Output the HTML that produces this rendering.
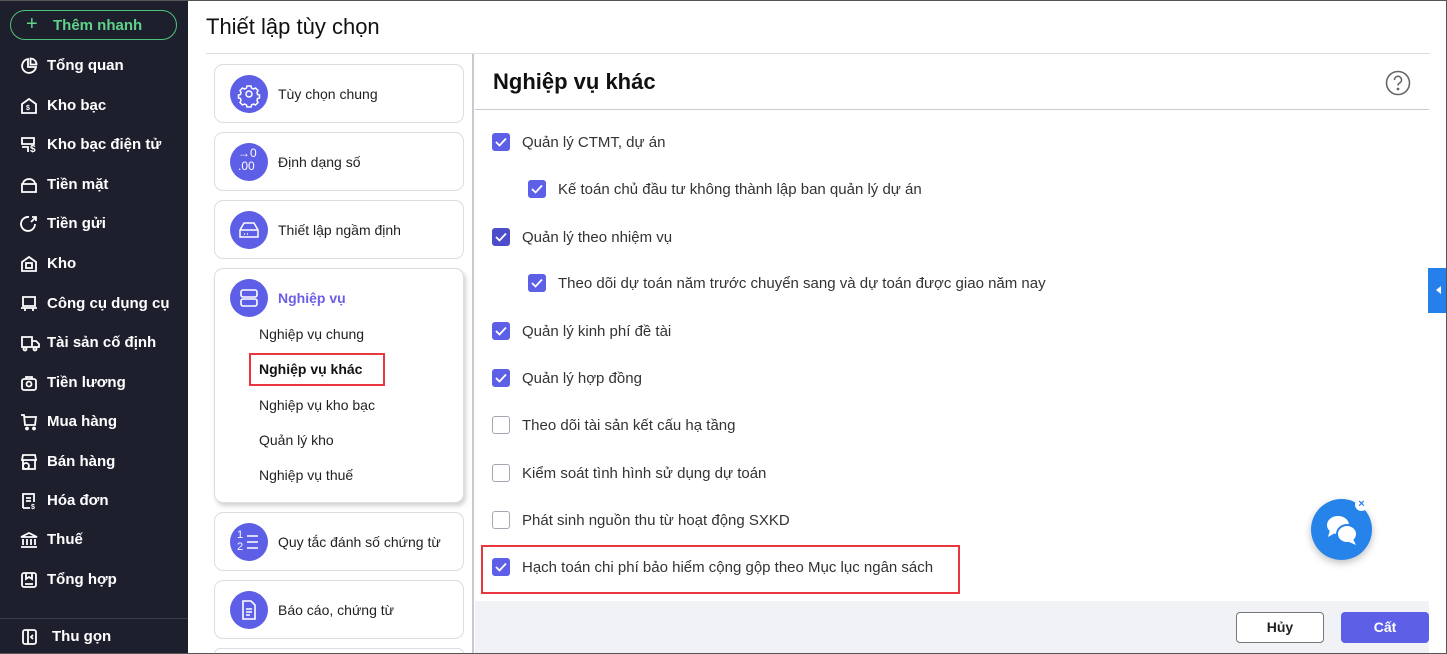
<!DOCTYPE html>
<html style="width:1447px;height:654px;overflow:hidden"><head><meta charset="utf-8"><style>
*{box-sizing:border-box;margin:0;padding:0}
body{width:1447px;height:654px;overflow:hidden;background:#fff;font-family:"Liberation Sans",sans-serif;position:relative;color:#222}
.abs{position:absolute}
#frame{position:absolute;left:0;top:0;width:1447px;height:654px;border:1px solid #555;border-left:none;pointer-events:none;z-index:50}
#side{left:0;top:0;width:188px;height:654px;background:#1e1f2d;color:#fff}
.add{left:10px;top:10px;width:167px;height:30px;border:1px solid #4fc27a;border-radius:15px;color:#5fd38a;font-size:15px;font-weight:bold}
.si{position:absolute;left:20px;font-size:15px;font-weight:bold;color:#fff;height:20px;line-height:20px;white-space:nowrap}
.si svg{position:absolute;left:0;top:1px}
.si span{position:absolute;left:27px}
.card{position:absolute;left:214px;width:250px;border:1px solid #dcdde3;border-radius:9px;background:#fff}
.ic{position:absolute;left:15px;width:38px;height:38px;border-radius:50%;background:#5d5fe6}
.ct{position:absolute;left:63px;font-size:14px;color:#222}
.sub{position:absolute;left:259px;font-size:14px;color:#222}
.cb{position:absolute;width:18px;height:18px;border-radius:3px;background:#5d5fe6}
.cb.off{background:#fff;border:1.5px solid #a5a7b2}
.cb svg{position:absolute;left:3px;top:4px}
.lb{position:absolute;font-size:15px;color:#333;white-space:nowrap}
</style></head><body>
<div id="frame"></div>
<div id="side" class="abs">
 <div class="abs add"><span style="position:absolute;left:15px;top:2px;font-size:20px;font-weight:normal;line-height:22px">+</span><span style="position:absolute;left:42px;top:6px">Thêm nhanh</span></div>
 <div class="si" style="top:56px"><svg width="18" height="18" viewBox="0 0 18 18" fill="none" stroke="#fff" stroke-width="1.8"><path d="M8 2a7 7 0 1 0 8 8H8z"/><path d="M10.5 1.5v6h6a6 6 0 0 0-6-6z"/></svg><span>Tổng quan</span></div>
 <div class="si" style="top:96px"><svg width="18" height="18" viewBox="0 0 18 18" fill="none" stroke="#fff" stroke-width="1.8"><path d="M2 7l7-5 7 5v9H2z"/><text x="6" y="13" font-size="7" fill="#fff" stroke="none">$</text></svg><span>Kho bạc</span></div>
 <div class="si" style="top:135px"><svg width="20" height="18" viewBox="0 0 20 18" fill="none" stroke="#fff" stroke-width="1.8"><path d="M2 2h12v6H2zM2 11h6v5"/><text x="10" y="16" font-size="10" fill="#fff" stroke="none" font-weight="bold">$</text></svg><span>Kho bạc điện tử</span></div>
 <div class="si" style="top:175px"><svg width="18" height="18" viewBox="0 0 18 18" fill="none" stroke="#fff" stroke-width="1.8"><path d="M3 8a6 5 0 0 1 12 0M2 8h14v8H2z"/></svg><span>Tiền mặt</span></div>
 <div class="si" style="top:214px"><svg width="18" height="18" viewBox="0 0 18 18" fill="none" stroke="#fff" stroke-width="1.8"><path d="M15 9a7 7 0 1 1-6-7M12 2h4v4M16 2l-5 5"/></svg><span>Tiền gửi</span></div>
 <div class="si" style="top:254px"><svg width="18" height="18" viewBox="0 0 18 18" fill="none" stroke="#fff" stroke-width="1.8"><path d="M2 7l7-5 7 5v9H2z"/><rect x="6" y="8" width="6" height="5"/></svg><span>Kho</span></div>
 <div class="si" style="top:294px"><svg width="18" height="18" viewBox="0 0 18 18" fill="none" stroke="#fff" stroke-width="1.8"><path d="M3 2h12v9H3zM1 13h16M5 13v3M13 13v3"/></svg><span>Công cụ dụng cụ</span></div>
 <div class="si" style="top:333px"><svg width="20" height="18" viewBox="0 0 20 18" fill="none" stroke="#fff" stroke-width="1.8"><path d="M2 3h10v10H2zM12 7h4l3 3v3h-7"/><circle cx="5" cy="15" r="1.5"/><circle cx="15" cy="15" r="1.5"/></svg><span>Tài sản cố định</span></div>
 <div class="si" style="top:373px"><svg width="18" height="18" viewBox="0 0 18 18" fill="none" stroke="#fff" stroke-width="1.8"><rect x="2" y="5" width="14" height="11" rx="2"/><path d="M6 5V3h6v2"/><circle cx="9" cy="10" r="2.5"/></svg><span>Tiền lương</span></div>
 <div class="si" style="top:412px"><svg width="18" height="18" viewBox="0 0 18 18" fill="none" stroke="#fff" stroke-width="1.8"><path d="M1 2h3l1 10h10l1-8H5"/><circle cx="7" cy="15.5" r="1"/><circle cx="14" cy="15.5" r="1"/></svg><span>Mua hàng</span></div>
 <div class="si" style="top:452px"><svg width="18" height="18" viewBox="0 0 18 18" fill="none" stroke="#fff" stroke-width="1.8"><path d="M3 2h12l1 5H2zM3 7v9h12V7"/><circle cx="6" cy="13" r="3"/></svg><span>Bán hàng</span></div>
 <div class="si" style="top:491px"><svg width="18" height="18" viewBox="0 0 18 18" fill="none" stroke="#fff" stroke-width="1.8"><path d="M3 16V2h11v8M6 6h5M6 9h5M3 16h7"/><text x="11" y="17" font-size="7" fill="#fff" stroke="none">$</text></svg><span>Hóa đơn</span></div>
 <div class="si" style="top:530px"><svg width="18" height="18" viewBox="0 0 18 18" fill="none" stroke="#fff" stroke-width="1.8"><path d="M1 6l8-4 8 4zM3 8v6M7 8v6M11 8v6M15 8v6M1 16h16"/></svg><span>Thuế</span></div>
 <div class="si" style="top:570px"><svg width="18" height="18" viewBox="0 0 18 18" fill="none" stroke="#fff" stroke-width="1.8"><rect x="2" y="2" width="14" height="14" rx="2"/><path d="M6 2v6l3-2 3 2V2M5 13h8"/></svg><span>Tổng hợp</span></div>
 <div class="si" style="top:610px;height:8px;overflow:hidden"><svg width="18" height="18" viewBox="0 0 18 18" fill="none" stroke="#fff" stroke-width="1.8"><rect x="2" y="2" width="14" height="14" rx="2"/></svg><span>Báo cáo</span></div>
 <div class="abs" style="left:0;top:618px;width:188px;height:36px;border-top:1px solid #3a3b4c;background:#1e1f2d"></div>
 <div class="si" style="top:627px;left:22px"><svg width="16" height="18" viewBox="0 0 16 18" fill="none" stroke="#fff" stroke-width="1.8"><rect x="1" y="2" width="13" height="14" rx="2"/><path d="M6 2v14M11 7l-2 2 2 2"/></svg><span style="left:30px">Thu gọn</span></div>
</div>

<div class="abs" style="left:206px;top:14px;font-size:22px;color:#111">Thiết lập tùy chọn</div>
<div class="abs" style="left:206px;top:53px;width:1224px;height:1px;background:#dcdde2"></div>
<div class="abs" style="left:472px;top:54px;width:2px;height:600px;background:#c9cad1"></div>

<div class="card" style="top:64px;height:59px"><div class="ic" style="top:10px"><svg width="38" height="38" viewBox="0 0 38 38" fill="none" stroke="#fff" stroke-width="1.5"><circle cx="19" cy="19" r="3"/><path d="M17 11h4l.5 2 2 1 2-1 2.5 2.5-1 2 .5 2 2 .5v3l-2 .5-.5 2 1 2-2.5 2.5-2-1-2 1-.5 2h-4l-.5-2-2-1-2 1-2.5-2.5 1-2-.5-2-2-.5v-3l2-.5.5-2-1-2 2.5-2.5 2 1 2-1z"/></svg></div><div class="ct" style="top:21px">Tùy chọn chung</div></div>
<div class="card" style="top:132px;height:59px"><div class="ic" style="top:10px"><div style="position:absolute;left:8px;top:4px;color:#fff;font-size:12px;line-height:13px">→0<br>.00</div></div><div class="ct" style="top:21px">Định dạng số</div></div>
<div class="card" style="top:200px;height:59px"><div class="ic" style="top:10px"><svg width="38" height="38" viewBox="0 0 38 38" fill="none" stroke="#fff" stroke-width="1.5"><path d="M10 19l4-7h10l4 7v7H10zM10 19h18"/><path d="M14 23h1M17 23h1"/></svg></div><div class="ct" style="top:21px">Thiết lập ngầm định</div></div>
<div class="card" style="top:268px;height:235px;box-shadow:2px 3px 5px rgba(0,0,0,.18)"><div class="ic" style="top:10px"><svg width="38" height="38" viewBox="0 0 38 38" fill="none" stroke="#fff" stroke-width="1.6"><rect x="11" y="11" width="16" height="7" rx="2"/><rect x="11" y="20" width="16" height="7" rx="2"/></svg></div><div class="ct" style="top:21px;color:#6a5fe6;font-weight:bold">Nghiệp vụ</div></div>
<div class="sub" style="top:326px">Nghiệp vụ chung</div>
<div class="abs" style="left:249px;top:353px;width:136px;height:33px;border:2px solid #e8373f"></div>
<div class="sub" style="top:361px;font-weight:bold;color:#111">Nghiệp vụ khác</div>
<div class="sub" style="top:397px">Nghiệp vụ kho bạc</div>
<div class="sub" style="top:432px">Quản lý kho</div>
<div class="sub" style="top:467px">Nghiệp vụ thuế</div>
<div class="card" style="top:512px;height:59px"><div class="ic" style="top:10px"><div style="position:absolute;left:7px;top:6px;color:#fff;font-size:11px;line-height:12px">1<br>2</div><svg width="38" height="38" viewBox="0 0 38 38" stroke="#fff" stroke-width="1.6"><path d="M17 13h11M17 19h11M17 25h11"/></svg></div><div class="ct" style="top:21px">Quy tắc đánh số chứng từ</div></div>
<div class="card" style="top:580px;height:59px"><div class="ic" style="top:10px"><svg width="38" height="38" viewBox="0 0 38 38" fill="none" stroke="#fff" stroke-width="1.6"><path d="M13 10h8l4 4v14H13z"/><path d="M16 18h6M16 21h6M16 24h4"/></svg></div><div class="ct" style="top:21px">Báo cáo, chứng từ</div></div>
<div class="card" style="top:648px;height:6px;border-bottom:none;border-radius:9px 9px 0 0"></div>

<div class="abs" style="left:493px;top:69px;font-size:22px;font-weight:bold;color:#111">Nghiệp vụ khác</div>
<svg class="abs" style="left:1385px;top:70px" width="26" height="26" viewBox="0 0 26 26" fill="none" stroke="#666" stroke-width="1.6"><circle cx="13" cy="13" r="11.5"/><path d="M9.5 10a3.5 3.5 0 1 1 5 3c-1 .6-1.5 1.2-1.5 2.5"/><circle cx="13" cy="19" r=".6" fill="#666"/></svg>
<div class="abs" style="left:475px;top:109px;width:954px;height:1px;background:#c9cad1"></div>

<div class="cb" style="left:492px;top:133px"><svg width="12" height="10" viewBox="0 0 12 10" fill="none" stroke="#fff" stroke-width="1.8"><path d="M1 5l3.5 3.5L11 1.5"/></svg></div><div class="lb" style="left:522px;top:134px">Quản lý CTMT, dự án</div>
<div class="cb" style="left:528px;top:180px"><svg width="12" height="10" viewBox="0 0 12 10" fill="none" stroke="#fff" stroke-width="1.8"><path d="M1 5l3.5 3.5L11 1.5"/></svg></div><div class="lb" style="left:558px;top:181px">Kế toán chủ đầu tư không thành lập ban quản lý dự án</div>
<div class="cb" style="left:492px;top:228px;background:#4b4dc9"><svg width="12" height="10" viewBox="0 0 12 10" fill="none" stroke="#fff" stroke-width="1.8"><path d="M1 5l3.5 3.5L11 1.5"/></svg></div><div class="lb" style="left:522px;top:229px">Quản lý theo nhiệm vụ</div>
<div class="cb" style="left:528px;top:274px"><svg width="12" height="10" viewBox="0 0 12 10" fill="none" stroke="#fff" stroke-width="1.8"><path d="M1 5l3.5 3.5L11 1.5"/></svg></div><div class="lb" style="left:558px;top:275px">Theo dõi dự toán năm trước chuyển sang và dự toán được giao năm nay</div>
<div class="cb" style="left:492px;top:322px"><svg width="12" height="10" viewBox="0 0 12 10" fill="none" stroke="#fff" stroke-width="1.8"><path d="M1 5l3.5 3.5L11 1.5"/></svg></div><div class="lb" style="left:522px;top:323px">Quản lý kinh phí đề tài</div>
<div class="cb" style="left:492px;top:369px"><svg width="12" height="10" viewBox="0 0 12 10" fill="none" stroke="#fff" stroke-width="1.8"><path d="M1 5l3.5 3.5L11 1.5"/></svg></div><div class="lb" style="left:522px;top:370px">Quản lý hợp đồng</div>
<div class="cb off" style="left:492px;top:416px"></div><div class="lb" style="left:522px;top:417px">Theo dõi tài sản kết cấu hạ tầng</div>
<div class="cb off" style="left:492px;top:464px"></div><div class="lb" style="left:522px;top:465px">Kiểm soát tình hình sử dụng dự toán</div>
<div class="cb off" style="left:492px;top:511px"></div><div class="lb" style="left:522px;top:512px">Phát sinh nguồn thu từ hoạt động SXKD</div>
<div class="abs" style="left:481px;top:545px;width:479px;height:49px;border:2px solid #e8373f"></div>
<div class="cb" style="left:492px;top:558px"><svg width="12" height="10" viewBox="0 0 12 10" fill="none" stroke="#fff" stroke-width="1.8"><path d="M1 5l3.5 3.5L11 1.5"/></svg></div><div class="lb" style="left:522px;top:559px">Hạch toán chi phí bảo hiểm cộng gộp theo Mục lục ngân sách</div>

<div class="abs" style="left:475px;top:601px;width:954px;height:53px;background:#f1f2f6"></div>
<div class="abs" style="left:1236px;top:612px;width:88px;height:31px;border:1px solid #777;border-radius:4px;background:#fff;text-align:center;line-height:29px;font-size:14px;font-weight:bold;color:#222">Hủy</div>
<div class="abs" style="left:1341px;top:612px;width:88px;height:31px;border-radius:4px;background:#5d5fe6;text-align:center;line-height:31px;font-size:14px;font-weight:bold;color:#fff">Cất</div>

<div class="abs" style="left:1428px;top:268px;width:19px;height:45px;background:#2680eb"><div style="position:absolute;left:8px;top:18px;width:0;height:0;border-top:4px solid transparent;border-bottom:4px solid transparent;border-right:5px solid #fff"></div></div>

<div class="abs" style="left:1311px;top:499px;width:61px;height:61px;border-radius:50%;background:#2683ea;box-shadow:0 3px 8px rgba(0,0,0,.25)">
<svg width="61" height="61" viewBox="0 0 61 61" fill="#fff"><ellipse cx="27" cy="26" rx="11" ry="9"/><path d="M19 31l-2 7 7-4z"/><ellipse cx="36" cy="35" rx="10" ry="9" stroke="#2683ea" stroke-width="2"/><path d="M42 40l3 6-7-3z"/></svg></div>
<div class="abs" style="left:1355px;top:498px;width:13px;height:13px;border-radius:50%;background:#fff;color:#2683ea;font-size:11px;line-height:13px;text-align:center;font-weight:bold">×</div>
</body></html>
